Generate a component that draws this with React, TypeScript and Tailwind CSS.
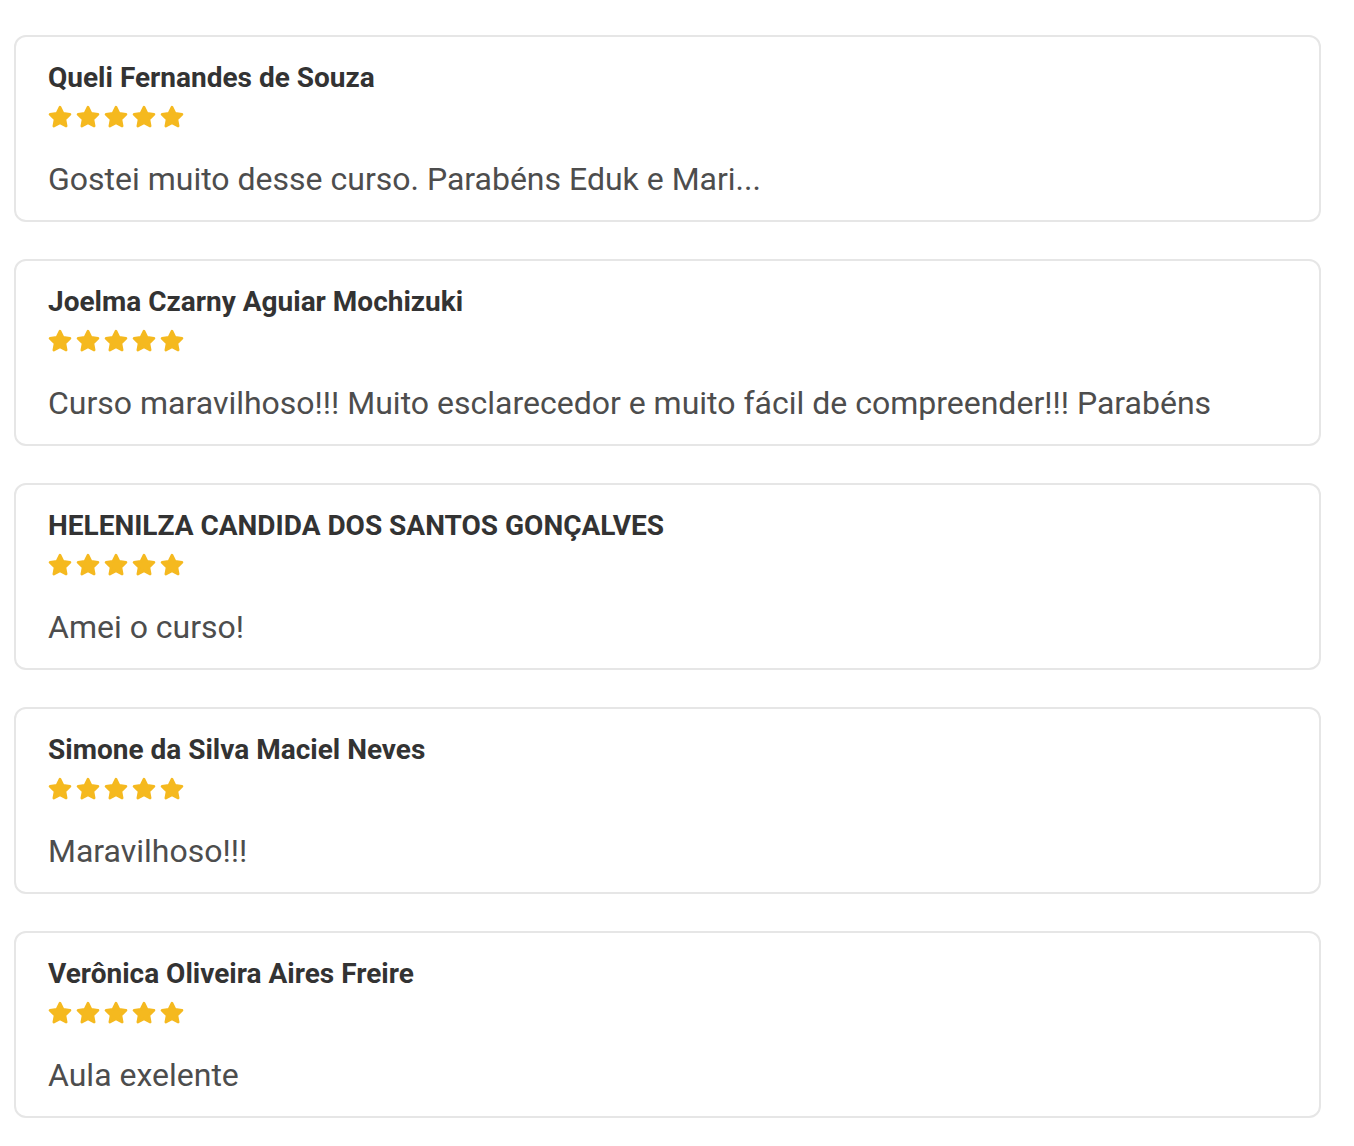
import React from "react";

const reviews = [
  { name: "Queli Fernandes de Souza", text: "Gostei muito desse curso. Parabéns Eduk e Mari..." },
  { name: "Joelma Czarny Aguiar Mochizuki", text: "Curso maravilhoso!!! Muito esclarecedor e muito fácil de compreender!!! Parabéns" },
  { name: "HELENILZA CANDIDA DOS SANTOS GONÇALVES", text: "Amei o curso!" },
  { name: "Simone da Silva Maciel Neves", text: "Maravilhoso!!!" },
  { name: "Verônica Oliveira Aires Freire", text: "Aula exelente" },
];

function Star() {
  return (
    <svg width="24" height="24" viewBox="0 0 24 24">
      <path
        d="M12 2.1L15.06 8.39 21.99 9.36 16.95 14.21 18.17 21.09 12 17.8 5.83 21.09 7.05 14.21 2.01 9.36 8.94 8.39Z"
        fill="#f5b91f"
        stroke="#f5b91f"
        strokeWidth="2.6"
        strokeLinejoin="round"
      />
    </svg>
  );
}

export default function App() {
  return (
    <div className="bg-white min-h-[1146px] pl-[14px] pr-[33px] pt-[35px] flex flex-col gap-[37px]" style={{ fontFamily: "Roboto, 'Noto Sans', sans-serif" }}>
      {reviews.map((r) => (
        <div key={r.name} className="border-2 border-[#e6e6e6] rounded-[12px] px-[32px] pt-[25px] pb-[21px] bg-white">
          <div className="text-[28px] leading-[32px] font-bold text-[#333333]">{r.name}</div>
          <div className="flex gap-[4px] mt-[11px]">
            {[0, 1, 2, 3, 4].map((i) => (
              <Star key={i} />
            ))}
          </div>
          <div className="mt-[30px] text-[32px] leading-[40px] text-[#4d4d4d]">{r.text}</div>
        </div>
      ))}
    </div>
  );
}
